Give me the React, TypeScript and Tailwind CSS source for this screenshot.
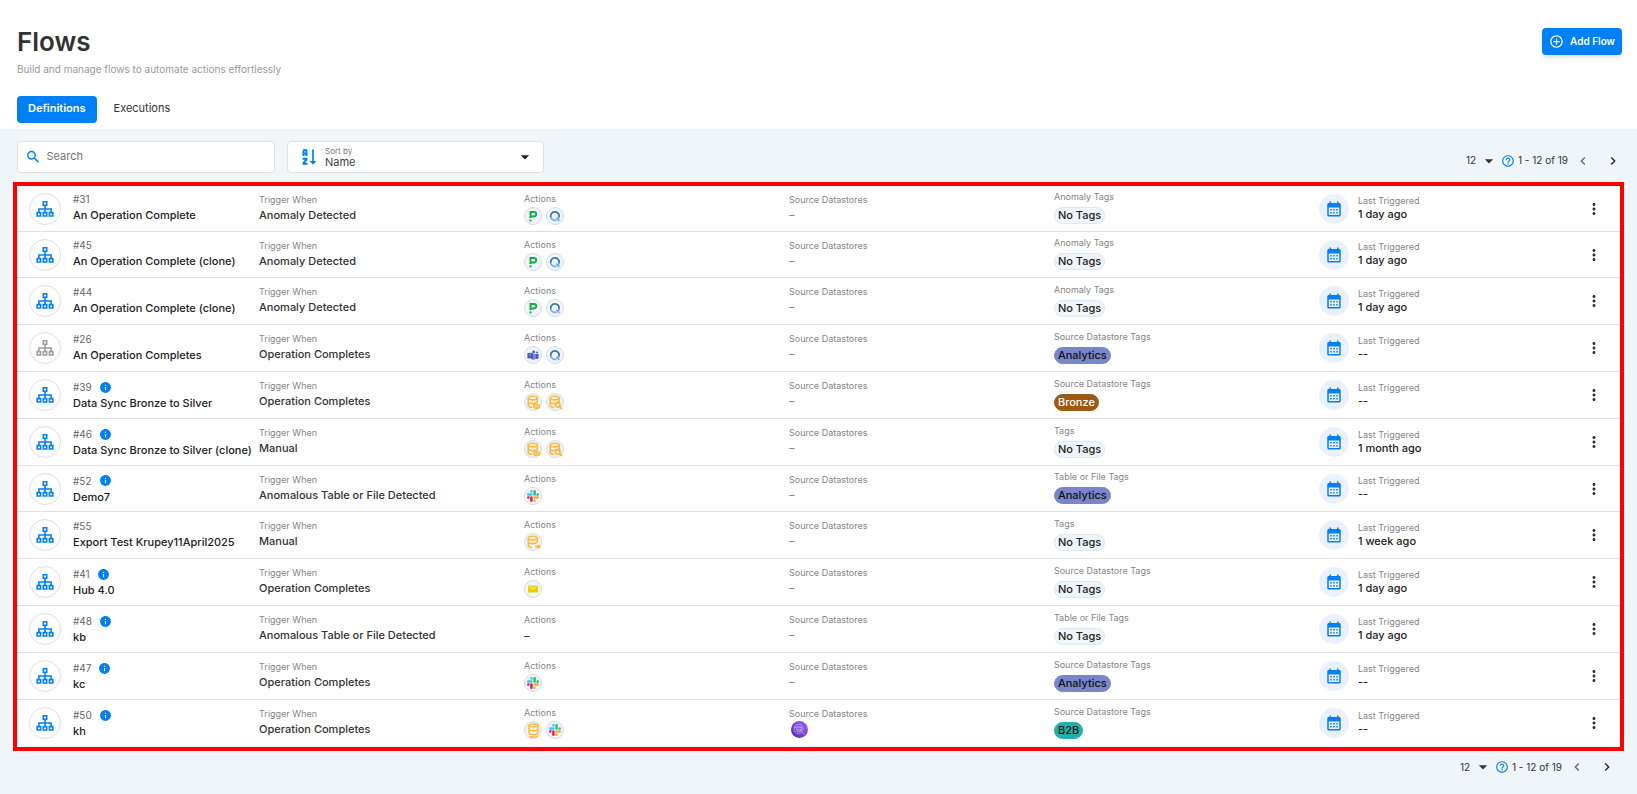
import {
  MdAddCircleOutline,
  MdArrowDropDown,
  MdChevronLeft,
  MdChevronRight,
  MdHelpOutline,
  MdInfo,
  MdMoreVert,
  MdSearch,
  MdCalendarMonth,
} from "react-icons/md";
import type { ReactNode } from "react";

type Action = "pager" | "qualytics" | "teams" | "catalog" | "scan" | "slack" | "export" | "mail" | "profile";
type Tag = "none" | "analytics" | "bronze" | "b2b";

interface Flow {
  id: number;
  name: string;
  info?: boolean;
  inactive?: boolean;
  trigger: string;
  actions: Action[];
  datastore?: boolean;
  tagLabel: string;
  tag: Tag;
  last: string;
}

const flows: Flow[] = [
  { id: 31, name: "An Operation Complete", trigger: "Anomaly Detected", actions: ["pager", "qualytics"], tagLabel: "Anomaly Tags", tag: "none", last: "1 day ago" },
  { id: 45, name: "An Operation Complete (clone)", trigger: "Anomaly Detected", actions: ["pager", "qualytics"], tagLabel: "Anomaly Tags", tag: "none", last: "1 day ago" },
  { id: 44, name: "An Operation Complete (clone)", trigger: "Anomaly Detected", actions: ["pager", "qualytics"], tagLabel: "Anomaly Tags", tag: "none", last: "1 day ago" },
  { id: 26, name: "An Operation Completes", inactive: true, trigger: "Operation Completes", actions: ["teams", "qualytics"], tagLabel: "Source Datastore Tags", tag: "analytics", last: "--" },
  { id: 39, name: "Data Sync Bronze to Silver", info: true, trigger: "Operation Completes", actions: ["catalog", "scan"], tagLabel: "Source Datastore Tags", tag: "bronze", last: "--" },
  { id: 46, name: "Data Sync Bronze to Silver (clone)", info: true, trigger: "Manual", actions: ["catalog", "scan"], tagLabel: "Tags", tag: "none", last: "1 month ago" },
  { id: 52, name: "Demo7", info: true, trigger: "Anomalous Table or File Detected", actions: ["slack"], tagLabel: "Table or File Tags", tag: "analytics", last: "--" },
  { id: 55, name: "Export Test Krupey11April2025", trigger: "Manual", actions: ["export"], tagLabel: "Tags", tag: "none", last: "1 week ago" },
  { id: 41, name: "Hub 4.0", info: true, trigger: "Operation Completes", actions: ["mail"], tagLabel: "Source Datastore Tags", tag: "none", last: "1 day ago" },
  { id: 48, name: "kb", info: true, trigger: "Anomalous Table or File Detected", actions: [], tagLabel: "Table or File Tags", tag: "none", last: "1 day ago" },
  { id: 47, name: "kc", info: true, trigger: "Operation Completes", actions: ["slack"], tagLabel: "Source Datastore Tags", tag: "analytics", last: "--" },
  { id: 50, name: "kh", info: true, trigger: "Operation Completes", actions: ["profile", "slack"], datastore: true, tagLabel: "Source Datastore Tags", tag: "b2b", last: "--" },
];

const tags: Record<Tag, { text: string; style: string }> = {
  none: { text: "No Tags", style: "border-[#d9e7f7] bg-[#f0f5fa] text-[#222]" },
  analytics: { text: "Analytics", style: "border-[#7986cb] bg-[#7986cb] text-[#111]" },
  bronze: { text: "Bronze", style: "border-[#9c5a14] bg-[#9c5a14] text-white" },
  b2b: { text: "B2B", style: "border-[#20b2aa] bg-[#20b2aa] text-[#111]" },
};

function Sitemap() {
  return (
    <svg viewBox="0 0 20 18" className="h-[18px] w-5" fill="none" stroke="currentColor" strokeWidth="1.6" aria-hidden="true">
      <path d="M8.3 1.8h3.4v3.4H8.3zM2.2 12.6h3.4v3.4H2.2zM8.3 12.6h3.4v3.4H8.3zM14.4 12.6h3.4v3.4h-3.4z" />
      <path d="M10 5.2v7.4M3.9 12.6V9h12.2v3.6" />
    </svg>
  );
}

function SortIcon() {
  return (
    <svg viewBox="0 0 16 18" className="h-[18px] w-4 text-[#0080f6]" fill="none" stroke="currentColor" aria-hidden="true">
      <path d="M2.5 8V3.200q0-1.200 1.300-1.200h.4q1.300 0 1.300 1.200V8M2.500 5.600h3" strokeWidth="2" />
      <path d="M1.500 10.800h4v.6l-3 3.600v.8h4" strokeWidth="2" />
      <path d="M12 1.500v13" strokeWidth="1.700" />
      <path d="M8.700 13h6.600L12 16.800z" fill="currentColor" stroke="none" />
    </svg>
  );
}

function Cylinder({ children }: { children?: ReactNode }) {
  return (
    <svg viewBox="0 0 20 20" className="size-[15px]" fill="none" stroke="#ffb939" strokeWidth="2.200" aria-hidden="true">
      <ellipse cx="9" cy="4" rx="6" ry="2.400" />
      <path d="M3 4v10c0 1.300 2 2.300 5 2.500M15 4v6M3 9c0 1.400 2.700 2.400 6 2.400 2.600 0 5-.6 6-1.800" />
      {children}
    </svg>
  );
}

function ActionGlyph({ kind }: { kind: Action }) {
  switch (kind) {
    case "pager":
      return (
        <svg viewBox="0 0 12 12" className="size-3" fill="none" stroke="#19ab43" strokeWidth="2" aria-hidden="true">
          <path d="M3.500 8V2H7q2.200 0 2.200 2T7 6.600H3.500" />
          <path d="M3.500 9.400v2" />
        </svg>
      );
    case "qualytics":
      return (
        <svg viewBox="0 0 12 12" className="size-3" fill="none" strokeWidth="1.800" aria-hidden="true">
          <path d="M1.800 7.500A4.300 4.300 0 1 1 10 7.400" stroke="#3474a8" />
          <path d="M1.800 7.500Q3 10.300 6 10.300h1.500M7.400 7.600l2.800 3.400M10 7.400Q9.500 9 8.400 9.400" stroke="#70afe6" />
        </svg>
      );
    case "teams":
      return (
        <svg viewBox="0 0 14 12" className="h-[11px] w-3" aria-hidden="true">
          <circle cx="7.800" cy="2" r="1.700" fill="#5b63d3" />
          <circle cx="11.800" cy="2.500" r="1.200" fill="#5059c9" />
          <path d="M9.500 4.200h4v4a2.300 2.300 0 0 1-4 1.200z" fill="#5059c9" />
          <path d="M5 4.200h5.500v3.900a3.200 3.200 0 0 1-6 1.400z" fill="#7b83eb" />
          <path d="M.5 3h6.300v6.300H.5z" fill="#464eb8" />
          <path d="M2 4.600h3.300M3.650 4.600v3.400" stroke="#aab0ee" strokeWidth=".8" />
        </svg>
      );
    case "catalog":
      return (
        <Cylinder>
          <ellipse cx="14.300" cy="15.300" rx="4" ry="2.600" />
          <circle cx="14.300" cy="15.300" r=".7" />
        </Cylinder>
      );
    case "scan":
      return (
        <Cylinder>
          <circle cx="13" cy="13" r="3.100" />
          <path d="M15.300 15.300l3.400 3.400" strokeWidth="2.400" />
        </Cylinder>
      );
    case "export":
      return (
        <Cylinder>
          <path d="M12 15.500h6M15.800 13l2.500 2.500-2.500 2.500" />
        </Cylinder>
      );
    case "profile":
      return (
        <svg viewBox="0 0 20 20" className="size-[15px]" fill="none" stroke="#ffb939" strokeWidth="2" aria-hidden="true">
          <ellipse cx="10" cy="3.300" rx="6" ry="2" />
          <path d="M4 3.300v10c0 1.200 2.700 2 6 2s6-.8 6-2v-10M4 8.200c0 1.200 2.700 2 6 2s6-.8 6-2M5 18.500h10" />
          <path d="M5 17v2M8.300 17v2M11.700 17v2M15 17v2" strokeWidth="1.200" />
        </svg>
      );
    case "mail":
      return (
        <svg viewBox="0 0 10 8" className="h-2 w-2.5" aria-hidden="true">
          <path d="M0 .500h10v7H0z" fill="#ead000" />
          <path d="M.8 1.500L5 3.800l4.200-2.300" fill="none" stroke="#fff6a8" strokeWidth=".8" />
        </svg>
      );
    case "slack":
      return (
        <svg viewBox="0 0 24 24" className="size-3" aria-hidden="true">
          <path fill="#36c5f0" d="M8.800 0a2.500 2.500 0 0 0 0 5h2.500V2.500A2.500 2.500 0 0 0 8.800 0zM2.500 6.300a2.500 2.500 0 0 0 0 5h6.300a2.500 2.500 0 0 0 0-5z" />
          <path fill="#2eb67d" d="M15.200 0a2.500 2.500 0 0 0-2.500 2.500v6.300a2.500 2.500 0 0 0 5 0V2.500A2.500 2.500 0 0 0 15.200 0zM21.500 6.300A2.500 2.500 0 0 0 19 8.800v2.500h2.500a2.500 2.500 0 0 0 0-5z" />
          <path fill="#e01e5a" d="M2.500 12.700a2.500 2.500 0 1 0 2.500 2.500v-2.500zM8.800 12.700a2.500 2.500 0 0 0-2.500 2.500v6.300a2.500 2.500 0 0 0 5 0v-6.300a2.500 2.500 0 0 0-2.500-2.500z" />
          <path fill="#ecb22e" d="M15.200 12.700a2.500 2.500 0 0 0 0 5h6.300a2.500 2.500 0 0 0 0-5zM12.700 19v2.500a2.500 2.500 0 1 0 2.500-2.500z" />
        </svg>
      );
  }
}

function DatastoreIcon() {
  return (
    <svg viewBox="0 0 18 18" className="ml-0.5 size-[17px]" fill="none" stroke="#c3a6f7" strokeWidth=".9" aria-label="Datastore" role="img">
      <defs>
        <linearGradient id="store" x1="0" y1="1" x2="1" y2="0">
          <stop stopColor="#4d27a8" />
          <stop offset="1" stopColor="#a166ff" />
        </linearGradient>
      </defs>
      <circle cx="9" cy="9" r="9" fill="url(#store)" stroke="none" />
      <circle cx="8" cy="8.300" r="4.800" />
      <circle cx="8.500" cy="8.500" r="2.700" />
      <path d="M3.500 7.200q4-2.500 8 0M7 11V8.500M8.500 11V7.500M10 10.500V8.500M11 11.500l3.400 3" />
    </svg>
  );
}

const label = "text-[9px] leading-[14px] text-[#858585]";
const value = "text-[11px] leading-4 font-medium text-[#333]";

function FlowRow({ flow }: { flow: Flow }) {
  return (
    <tr className="h-[47px] first:h-[46px] nth-[5n+2]:h-[46px] *:border-b *:border-[#e0e0e0] *:p-0 last:*:border-b-0">
      <td>
        <div className="flex items-center gap-3 pl-3">
          <span className={`flex size-8 shrink-0 items-center justify-center rounded-full border border-[#e0e0e0] ${flow.inactive ? "text-[#9e9e9e]" : "text-[#0080f6]"}`}>
            <Sitemap />
          </span>
          <div className={flow.info ? "" : "pb-[3px]"}>
            <div className="flex items-center gap-[7px] text-[10px] leading-4 text-[#666]">
              #{flow.id}
              {flow.info && <MdInfo className="size-[13px] text-[#0080f6]" />}
            </div>
            <a href="#flow" className="block text-[11px] leading-4 font-medium whitespace-nowrap text-[#222]">{flow.name}</a>
          </div>
        </div>
      </td>
      <td>
        <div className="pb-0.5">
          <div className={label}>Trigger When</div>
          <div className={value}>{flow.trigger}</div>
        </div>
      </td>
      <td>
        <div className={label}>Actions</div>
        <div className="my-px flex gap-1">
          {flow.actions.map((kind) => (
            <span key={kind} className="flex size-[18px] items-center justify-center rounded-full border border-[#d5dce4] bg-[#f0f5fa]">
              <ActionGlyph kind={kind} />
            </span>
          ))}
          {flow.actions.length === 0 && <span className={value}>–</span>}
        </div>
      </td>
      <td>
        <div className="pb-0.5">
          <div className={label}>Source Datastores</div>
          {flow.datastore ? <DatastoreIcon /> : <div className="text-[11px] leading-4 text-[#858585]">–</div>}
        </div>
      </td>
      <td>
        <div className="pb-[3px]">
          <div className={label}>{flow.tagLabel}</div>
          <span className={`mt-[3px] flex h-[17px] w-fit items-center rounded-full border px-[3px] text-[11px] font-medium ${tags[flow.tag].style}`}>{tags[flow.tag].text}</span>
        </div>
      </td>
      <td>
        <div className="flex items-center gap-[9px]">
          <span className="flex size-[30px] shrink-0 items-center justify-center rounded-full bg-[#eaf1fd] text-[#0080f6]">
            <MdCalendarMonth className="size-[18px]" />
          </span>
          <div className="pb-[3px]">
            <div className={label}>Last Triggered</div>
            <div className="text-[11px] leading-3 font-medium text-[#222]">{flow.last}</div>
          </div>
        </div>
      </td>
      <td>
        <button type="button" aria-label="More options" className="mr-4 ml-auto flex size-5 items-center justify-center text-[#333]">
          <MdMoreVert className="size-[18px]" />
        </button>
      </td>
    </tr>
  );
}

function Pager({ id }: { id: string }) {
  return (
    <nav aria-label="Pagination" className="flex items-center pr-px text-[10px] text-[#333]">
      <div className="flex items-center">
        <select id={id} aria-label="Rows per page" defaultValue="12" className="appearance-none bg-transparent">
          <option>12</option>
          <option>24</option>
        </select>
        <MdArrowDropDown className="size-5 text-[#333]" />
      </div>
      <MdHelpOutline className="mr-[3px] ml-0.5 size-[14px] text-[#0080f6]" />
      <span>1 - 12 of 19</span>
      <button type="button" aria-label="Previous page" className="ml-[7px] text-[#666]"><MdChevronLeft className="size-4" /></button>
      <button type="button" aria-label="Next page" className="ml-3.5 text-[#222]"><MdChevronRight className="size-4" /></button>
    </nav>
  );
}

export default function App() {
  return (
    <div className="min-h-screen bg-[#f0f5fa] font-['Inter',sans-serif]">
      <header className="h-[129px] bg-white pt-7 pr-[15px] pl-[17px]">
        <div className="flex items-start justify-between">
          <div>
            <h1 className="text-[26px] leading-7 font-semibold text-[#333]">Flows</h1>
            <p className="mt-[5px] text-[10px] leading-4 text-[#999]">Build and manage flows to automate actions effortlessly</p>
          </div>
          <button type="button" className="flex h-[27px] items-center gap-1.5 rounded-sm bg-[#0080f6] px-[7px] text-[10px] font-semibold text-white shadow-md">
            <MdAddCircleOutline className="size-[15px]" />
            Add Flow
          </button>
        </div>
        <div role="tablist" className="mt-[19px] flex text-[11px]">
          <button type="button" role="tab" aria-selected="true" className="h-[27px] rounded-sm bg-[#0080f6] px-[11px] pb-0.5 font-semibold text-white">Definitions</button>
          <button type="button" role="tab" aria-selected="false" className="h-[27px] px-[17px] pb-0.5 text-[#333]">Executions</button>
        </div>
      </header>
      <main className="pt-3">
        <div className="flex items-center gap-3 pr-[15px] pl-[17px]">
          <label className="flex h-8 w-[258px] items-center gap-[5px] rounded-sm border border-[#e0e0e0] bg-white pl-[7px]">
            <MdSearch className="size-[18px] text-[#0080f6]" />
            <input type="text" aria-label="Search" placeholder="Search" className="w-full pb-0.5 text-[11px] placeholder:text-[#757575]" />
          </label>
          <div className="flex h-8 w-[257px] items-center gap-2 rounded-sm border border-[#e0e0e0] bg-white pr-2 pl-[13px]">
            <SortIcon />
            <div className="flex-1">
              <label htmlFor="sort" className="block text-[8px] leading-[10px] text-[#757575]">Sort by</label>
              <select id="sort" className="block w-full appearance-none text-[11px] leading-3 text-[#444]">
                <option>Name</option>
                <option>Last Triggered</option>
              </select>
            </div>
            <MdArrowDropDown className="size-5 text-[#222]" />
          </div>
          <div className="mt-[7px] ml-auto"><Pager id="rows-top" /></div>
        </div>
        <section className="mx-[13px] mt-[9px] border-4 border-[#ff0000] pb-px">
          <table aria-label="Flows" className="w-full table-fixed border-separate border-spacing-0 bg-white">
            <colgroup>
              <col className="w-[15.1%]" />
              <col className="w-[16.53%]" />
              <col className="w-[16.53%]" />
              <col className="w-[16.53%]" />
              <col className="w-[16.53%]" />
              <col className="w-[14%]" />
              <col />
            </colgroup>
            <tbody>
              {flows.map((flow) => <FlowRow key={flow.id} flow={flow} />)}
            </tbody>
          </table>
        </section>
        <div className="mt-1.5 flex justify-end pr-[21px]"><Pager id="rows-bottom" /></div>
      </main>
    </div>
  );
}
